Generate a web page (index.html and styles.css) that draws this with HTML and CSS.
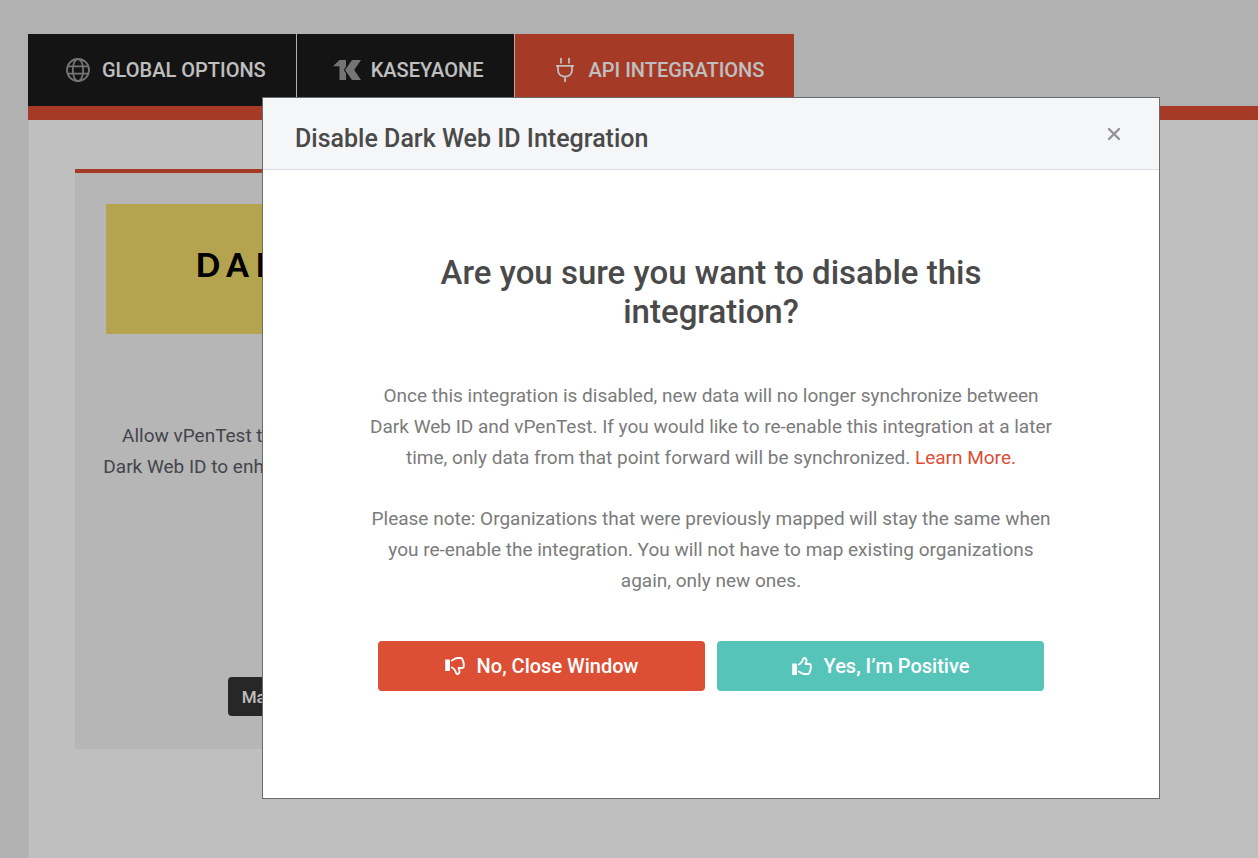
FILE: index.html
```html
<!DOCTYPE html>
<html lang="en">
<head>
  <meta charset="UTF-8" />
  <meta name="viewport" content="width=device-width, initial-scale=1.0"/>
  <title>API Integrations</title>
  <link rel="stylesheet" href="styles.css">
</head>
<body>
  <div class="page">
    <nav class="tabs">
      <a href="#global" class="tab">
        <span class="tab-icon">
          <svg width="24" height="24" viewBox="0 0 24 24" fill="none" stroke="currentColor" stroke-width="1.8">
            <circle cx="12" cy="12" r="11"/>
            <ellipse cx="12" cy="12" rx="5.2" ry="11"/>
            <path d="M1.8 8.3h20.4M1.8 15.7h20.4"/>
          </svg>
        </span>
        Global Options
      </a>
      <a href="#kaseyaone" class="tab">
        <span class="tab-icon">
          <svg width="28" height="20" viewBox="0 0 28 20" fill="currentColor">
            <path d="M0 6.2 6.5 0H13v6.5L10.800 10l2.200 3.500V20H6.500V6.200z"/>
            <path d="M19 0h9l-6.800 10L28 20h-9l-7-10z"/>
          </svg>
        </span>
        KaseyaOne
      </a>
      <a href="#api" class="tab active">
        <span class="tab-icon">
          <svg width="18" height="24" viewBox="0 0 18 24" fill="none" stroke="currentColor" stroke-width="1.8">
            <path d="M5 0v5.5M13 0v5.5M0 7.8h18M2 8v4c0 4 3 6.6 7 6.6s7-2.6 7-6.6V8M9 18.5V24"/>
          </svg>
        </span>
        API Integrations
      </a>
    </nav>

    <main class="panel">
      <section class="card">
        <div class="card-logo">DARK WEB ID</div>
        <p class="card-text">Allow vPenTest to pull compromised accounts from<br>Dark Web ID to enhance your penetration testing results.</p>
        <button type="button" class="manage-button">Manage Integration Setup</button>
      </section>
    </main>
  </div>

  <div class="overlay">
    <div class="modal" role="dialog" aria-modal="true" aria-labelledby="modalTitle">
      <div class="modal-header">
        <h2 id="modalTitle">Disable Dark Web ID Integration</h2>
        <button type="button" class="close-button" aria-label="Close">
          <svg width="14" height="14" viewBox="0 0 14 14" fill="none" stroke="currentColor" stroke-width="2.4" stroke-linecap="round">
            <path d="M2 2l10 10M12 2L2 12"/>
          </svg>
        </button>
      </div>

      <div class="modal-body">
        <h1>Are you sure you want to disable this integration?</h1>
        <p>Once this integration is disabled, new data will no longer synchronize between Dark Web ID and vPenTest. If you would like to re-enable this integration at a later time, only data from that point forward will be synchronized. <a href="#learn">Learn More.</a></p>
        <p>Please note: Organizations that were previously mapped will stay the same when you re-enable the integration. You will not have to map existing organizations again, only new ones.</p>

        <div class="modal-actions">
          <button type="button" class="btn btn-no">
            <svg width="20" height="18" viewBox="0 0 20 18" fill="none" stroke="currentColor" stroke-width="1.8" stroke-linejoin="round" stroke-linecap="round">
              <path d="M0.5 3h4v10.5h-4z" fill="currentColor" stroke-width="1"/>
              <path d="M6.8 3.6C9 2.2 10 1 12.5 1h2.8c1.6 0 2.4.9 2.2 2.2.9.6 1.1 1.6.7 2.4.8.7.9 1.7.4 2.5.7 1.4 0 2.9-1.5 2.9h-3.6c.6 1.4 1.2 2.5 1 3.8-.2 1.5-1.2 2.2-2.7 2.2-1.3-1-1-2.6-1.8-3.7C8.9 12 8.4 11 6.8 10.5"/>
            </svg>
            No, Close Window
          </button>
          <button type="button" class="btn btn-yes">
            <svg width="20" height="18" viewBox="0 0 20 18" fill="none" stroke="currentColor" stroke-width="1.8" stroke-linejoin="round" stroke-linecap="round">
              <path d="M0.5 7h4v10.5h-4z" fill="currentColor" stroke-width="1"/>
              <path d="M6.8 7.5C8.4 7 8.9 6 10 4.7 10.800 3.600 10.500 2 11.800 1c1.500 0 2.500.7 2.700 2.200.2 1.300-.4 2.400-1 3.800h3.600c1.500 0 2.200 1.500 1.500 2.900.500.8.4 1.800-.4 2.500.4.800.2 1.800-.7 2.400.2 1.300-.6 2.200-2.200 2.200h-2.800C10 17 9 15.800 6.800 14.400"/>
            </svg>
            Yes, I’m Positive
          </button>
        </div>
      </div>
    </div>
  </div>
</body>
</html>
```

FILE: styles.css
```css
* {
  box-sizing: border-box;
}

body {
  font-family: Roboto, Arial, sans-serif;
  font-size: 19px;
  background-color: #ededed;
  color: #5b5c66;
  margin: 0;
}

button {
  font-family: inherit;
  border: none;
  cursor: pointer;
}

.page {
  display: flex;
  flex-direction: column;
  min-height: 100vh;
  padding: 34px 0 0 28px;
}

/* tabs */
.tabs {
  display: flex;
  gap: 1px;
  border-bottom: 14px solid #dc4f35;
}

.tab {
  display: flex;
  align-items: center;
  gap: 10px;
  height: 72px;
  padding: 0 30px 0 36px;
  background-color: #1b1b1b;
  color: white;
  font-size: 20px;
  font-weight: 500;
  text-decoration: none;
  text-transform: uppercase;
}

.tab.active {
  background-color: #dc4f35;
}

.tab-icon {
  display: flex;
  justify-content: center;
  width: 28px;
  color: #9c9c9c;
}

.tab.active .tab-icon {
  color: white;
}

/* integration cards */
.panel {
  flex: 1;
  padding: 49px 46px;
  background-color: white;
  border-left: 1px solid #f3f3f3;
}

.card {
  display: flex;
  flex-direction: column;
  align-items: center;
  max-width: 530px;
  min-height: 580px;
  padding: 31px 31px 33px;
  background-color: #f3f3f3;
  border-top: 4px solid #dc4f35;
}

.card-logo {
  display: flex;
  align-items: center;
  justify-content: center;
  width: 100%;
  height: 130px;
  padding-bottom: 10px;
  background-color: #f0db6b;
  color: black;
  font-family: Lato, sans-serif;
  font-size: 32px;
  font-weight: 900;
  letter-spacing: 7px;
}

.card-text {
  margin: 86px 0 0;
  line-height: 31px;
  text-align: center;
  white-space: nowrap;
}

.manage-button {
  height: 39px;
  margin-top: auto;
  padding: 0 14px;
  background-color: #353535;
  border-radius: 4px;
  color: white;
  font-size: 17px;
  font-weight: 500;
}

/* modal */
.overlay {
  position: fixed;
  inset: 0;
  padding: 97px 98px 59px 262px;
  background-color: rgba(0, 0, 0, 0.25);
  overflow: auto;
}

.modal {
  background-color: white;
  border: 1px solid #6b6b6b;
}

.modal-header {
  display: flex;
  align-items: center;
  justify-content: space-between;
  height: 72px;
  padding: 10px 38px 0 32px;
  background-color: #f4f6f8;
  border-bottom: 1px solid #d9dde4;
}

.modal-header h2 {
  margin: 0;
  color: #4a4a4a;
  font-size: 25px;
  font-weight: 500;
}

.close-button {
  display: flex;
  padding: 0;
  margin-bottom: 10px;
  background: none;
  color: #929292;
}

.modal-body {
  max-width: 690px;
  margin: 0 auto;
  padding: 83px 0 107px;
  text-align: center;
}

.modal-body h1 {
  max-width: 600px;
  margin: 0 auto 49px;
  color: #4a4a4a;
  font-size: 33px;
  font-weight: 500;
  line-height: 39px;
}

.modal-body p {
  margin: 0 0 30px;
  color: #7b7b7b;
  line-height: 31px;
}

.modal-body a {
  color: #dc4f35;
  text-decoration: none;
}

.modal-actions {
  display: flex;
  gap: 12px;
  margin: 45px 12px 0;
}

.btn {
  display: flex;
  flex: 1;
  align-items: center;
  justify-content: center;
  gap: 12px;
  height: 50px;
  border-radius: 4px;
  color: white;
  font-size: 20px;
  font-weight: 500;
}

.btn-no {
  background-color: #dc4f35;
}

.btn-yes {
  background-color: #57c4ba;
}
```
